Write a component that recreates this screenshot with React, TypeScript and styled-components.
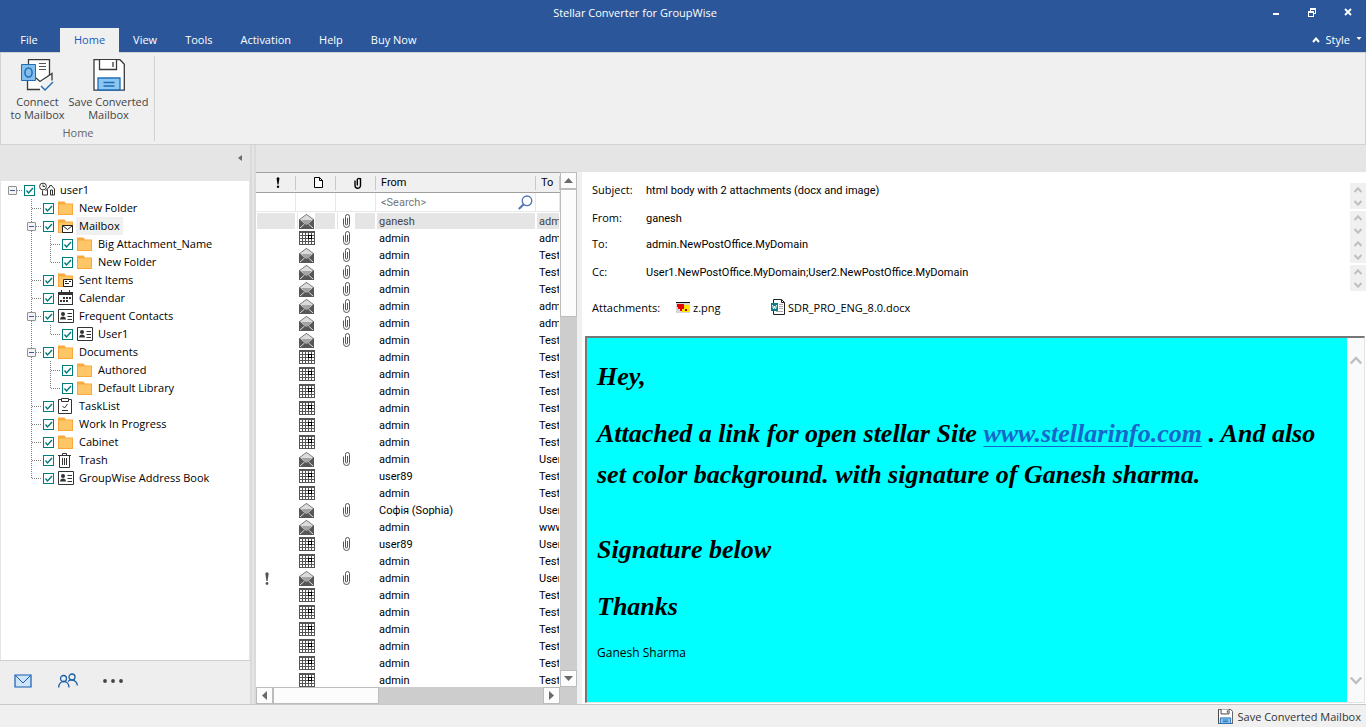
import React from "react";
import styled, { createGlobalStyle, css } from "styled-components";

const UI = `"Open Sans", "Noto Sans", sans-serif`;
const LIST = `Roboto, "Noto Sans", sans-serif`;

const GlobalStyle = createGlobalStyle`
  * { box-sizing: border-box; }
  body { margin: 0; background: #f0f0f0; font-family: ${UI}; font-size: 11px; color: #000; }
  button, input { font: inherit; color: inherit; padding: 0; margin: 0; border: 0; background: none; }
  svg { display: block; flex: none; }
`;

const Window = styled.div`
  height: 100vh;
  display: flex;
  flex-direction: column;
  overflow: hidden;
`;

/* ---------- title bar and tabs ---------- */

const TitleBar = styled.header`
  display: flex;
  height: 28px;
  flex: none;
  background: #2b579a;
  color: #fff;
`;

const Title = styled.h1`
  flex: 1;
  margin: 0;
  padding-left: 12px;
  font-size: 11px;
  font-weight: 400;
  line-height: 26px;
  text-align: center;
`;

const WindowButton = styled.button`
  width: 36px;
  height: 24px;
  display: grid;
  place-items: center;
`;

const TabBar = styled.nav`
  display: flex;
  height: 24px;
  flex: none;
  background: #2b579a;
  color: #fff;
`;

const Tab = styled.button<{ $active?: boolean; $file?: boolean }>`
  padding: 0 14px;
  line-height: 24px;
  white-space: nowrap;
  ${(p) => p.$file && css`width: 60px; padding-right: 16px;`}
  ${(p) =>
    p.$active &&
    css`
      background: #f0f0f0;
      color: #185abd;
      height: 25px;
      padding-bottom: 1px;
      position: relative;
    `}
`;

const StyleMenu = styled.button`
  margin-left: auto;
  padding: 0 4px 1px 0;
  display: flex;
  align-items: center;
  gap: 6px;
`;

/* ---------- ribbon ---------- */

const Ribbon = styled.section`
  height: 93px;
  flex: none;
  padding: 3px 1px;
  border: 1px solid #d2d2d2;
  background: #f0f0f0;
  display: flex;
`;

const RibbonGroup = styled.div`
  display: flex;
  flex-direction: column;
  width: 153px;
  border-right: 1px solid #d2d2d2;
`;

const RibbonButtons = styled.div`
  display: flex;
  justify-content: center;
  padding-left: 3px;
`;

const RibbonButton = styled.button`
  display: flex;
  flex-direction: column;
  align-items: center;
  gap: 4px;
  padding: 3px 2px 0;
  line-height: 13px;
  color: #444;
  white-space: pre-line;
`;

const GroupLabel = styled.div`
  margin-top: 5px;
  line-height: 14px;
  text-align: center;
  color: #666;
`;

/* ---------- workspace ---------- */

const Workspace = styled.main`
  flex: 1;
  min-height: 0;
  display: flex;
  background: #e5e5e5;
`;

const Sidebar = styled.aside`
  width: 250px;
  flex: none;
  display: flex;
  flex-direction: column;
`;

const SidebarHead = styled.div`
  height: 36px;
  flex: none;
  display: flex;
  justify-content: flex-end;
  padding: 7px 8px 0 0;
`;

const CollapseButton = styled.button`
  width: 5px;
  height: 12px;
`;

const Tree = styled.ul`
  flex: 1;
  min-height: 0;
  margin: 0 1px;
  padding: 0 0 0 2px;
  overflow: hidden;
  list-style: none;
  background: #fff;
`;

const TreeRow = styled.li`
  display: flex;
  align-items: center;
  height: 18px;
`;

type Line = "none" | "pass" | "tee" | "end";

const vertical = "repeating-linear-gradient(to bottom, #808080 0 1px, transparent 1px 2px)";
const horizontal = "repeating-linear-gradient(to right, #808080 0 1px, transparent 1px 2px)";

const Guide = styled.span<{ $line: Line }>`
  width: 19px;
  height: 18px;
  flex: none;
  display: grid;
  place-items: center;
  background-repeat: no-repeat;
  background-image: ${(p) =>
    p.$line === "none" ? "none" : p.$line === "pass" ? vertical : `${vertical}, ${horizontal}`};
  background-position: 9px 0, 10px 9px;
  background-size: 1px ${(p) => (p.$line === "end" ? "10px" : "18px")}, 9px 1px;
`;

const RootGuide = styled(Guide)`
  background-image: ${horizontal};
  background-position: 10px 9px;
  background-size: 9px 1px;
`;

const Expander = styled.button`
  width: 9px;
  height: 9px;
  border: 1px solid #919191;
  border-radius: 1px;
  background: linear-gradient(#3c5aa0, #3c5aa0) center / 5px 1px no-repeat, #f4f4f4;
`;

const CheckCell = styled.span`
  display: grid;
  margin: 0 4px 0 2px;
  > * { grid-area: 1 / 1; }
  svg { pointer-events: none; }
`;

const Check = styled.input`
  appearance: none;
  width: 11px;
  height: 11px;
  border: 1px solid #007c7c;
  background: #fff;
`;

const TreeIcon = styled.span`
  width: 18px;
  height: 16px;
  flex: none;
`;

const TreeLabel = styled.label<{ $selected?: boolean }>`
  height: 18px;
  padding: 0 3px;
  line-height: 17px;
  white-space: nowrap;
  background: ${(p) => (p.$selected ? "#f0f0f0" : "transparent")};
`;

const SidebarNav = styled.nav`
  height: 44px;
  flex: none;
  display: flex;
  align-items: center;
  gap: 25px;
  padding: 0 0 4px 13px;
  border-top: 1px solid #cfcfcf;
  background: #eee;
`;

const NavButton = styled.button`
  width: 20px;
  height: 20px;
  display: grid;
  place-items: center;
`;

const Splitter = styled.div`
  width: 6px;
  flex: none;
  background: #e5e5e5;
  border: solid #dadada;
  border-width: 0 2px;
`;

const Content = styled.div`
  flex: 1;
  min-width: 0;
  display: flex;
  padding-top: 27px;
`;

/* ---------- message list ---------- */

const ListPane = styled.section`
  width: 326px;
  flex: none;
  display: grid;
  grid-template: minmax(0, 1fr) 17px / 304px 17px;
  background: #f0f0f0;
`;

const TableArea = styled.div`
  overflow: hidden;
  background: #fff;
`;

const Table = styled.table`
  width: 100%;
  table-layout: fixed;
  border-collapse: separate;
  border-spacing: 0;
  font-family: ${LIST};
  white-space: nowrap;
  th, td { padding: 0; overflow: hidden; }
`;

const HeadCell = styled.th`
  height: 21px;
  font-weight: 400;
  text-align: left;
  border: solid #a0a0a0;
  border-width: 1px 0;
  background: linear-gradient(#c8c8c8, #c8c8c8) right center / 1px 14px no-repeat, #f0f0f0;
`;

const HeadInner = styled.div<{ $icon?: boolean }>`
  display: flex;
  align-items: center;
  justify-content: ${(p) => (p.$icon ? "center" : "flex-start")};
  padding-left: ${(p) => (p.$icon ? 4 : 5)}px;
`;

const SearchCell = styled.td`
  height: 19px;
  border: solid #e8e8e8;
  border-width: 0 1px 1px 0;
`;

const SearchField = styled.div`
  display: flex;
  align-items: center;
  padding: 0 2px 0 5px;
`;

const SearchInput = styled.input`
  flex: 1;
  min-width: 0;
  height: 18px;
  outline: 0;
  &::placeholder { color: #777; opacity: 1; }
`;

const Cell = styled.td<{ $selected?: boolean }>`
  height: 17px;
  color: ${(p) => (p.$selected ? "#444" : "#000")};
  background-clip: padding-box;
  border: solid #fff;
  border-width: 1px 1px 0;
  background-color: ${(p) => (p.$selected ? "#e5e5e5" : "#fff")};
`;

const CellInner = styled.div<{ $kind: "flag" | "icon" | "text" }>`
  display: flex;
  align-items: center;
  height: 16px;
  padding-left: ${(p) => (p.$kind === "flag" ? 8 : p.$kind === "icon" ? 1 : 2)}px;
`;

const IconPatch = styled.span`
  width: 17px;
  height: 16px;
  display: grid;
  place-items: center;
  background: #fff;
`;

const VScroll = styled.div`
  display: flex;
  flex-direction: column;
  background: #cdcdcd;
`;

const HScroll = styled.div`
  display: flex;
  background: #cdcdcd;
`;

const ScrollButton = styled.button`
  width: 17px;
  height: 17px;
  flex: none;
  display: grid;
  place-items: center;
  border: 1px solid #bcbcbc;
  background: #fcfcfc;
`;

const Thumb = styled.div<{ $vertical?: boolean }>`
  border: 1px solid #bcbcbc;
  background: #fcfcfc;
  ${(p) => (p.$vertical ? "height: 128px;" : "width: 106px;")}
`;

const Track = styled.div`
  flex: 1;
`;

const Corner = styled.div`
  background: #cdcdcd;
`;

/* ---------- preview ---------- */

const Preview = styled.section`
  flex: 1;
  min-width: 0;
  display: flex;
  flex-direction: column;
  background: #fff;
`;

const Fields = styled.div`
  flex: none;
  display: flex;
  flex-direction: column;
  gap: 2px;
  padding: 11px 0 15px 10px;
`;

const Field = styled.div`
  display: flex;
  height: 26px;
  line-height: 14px;
`;

const FieldName = styled.span`
  width: 54px;
  flex: none;
`;

const FieldValue = styled.span`
  flex: 1;
  min-width: 0;
  font-family: ${LIST};
  line-height: 16px;
  white-space: nowrap;
  overflow: hidden;
`;

const Spin = styled.div`
  width: 16px;
  height: 26px;
  flex: none;
  display: grid;
  background: #f0f0f0;
`;

const SpinButton = styled.button`
  display: grid;
  place-items: center;
  padding-right: 1px;
`;

const AttachmentRow = styled.div`
  display: flex;
  align-items: center;
  height: 28px;
`;

const AttachmentName = styled.span`
  width: 84px;
`;

const Attachment = styled.button`
  display: flex;
  align-items: center;
  gap: 3px;
  width: 95px;
  white-space: nowrap;
`;

const BodyFrame = styled.article`
  flex: 1;
  min-height: 0;
  margin: 0 1px 1px 3px;
  display: flex;
  border: solid #777;
  border-width: 2px 1px 1px 2px;
  border-right-color: #e3e3e3;
  border-bottom-color: #e3e3e3;
`;

const MessageBody = styled.div`
  flex: 1;
  min-width: 0;
  overflow: hidden;
  padding: 18px 24px 0 10px;
  background: #00ffff;
`;

const Script = styled.p`
  margin: 0 0 16px;
  font-family: "Liberation Serif", serif;
  font-style: italic;
  font-weight: 700;
  font-size: 26px;
  line-height: 41px;
`;

const SignatureBlock = styled.div`
  margin-top: 34px;
`;

const Signer = styled.p`
  margin: 0;
  font-size: 12px;
  line-height: 20px;
`;

const BodyLink = styled.a`
  color: #1766c9;
  text-decoration: underline;
  text-decoration-thickness: 1px;
  text-underline-offset: 4px;
`;

const BodyScroll = styled.div`
  width: 17px;
  flex: none;
  display: flex;
  flex-direction: column;
  justify-content: space-between;
  padding: 12px 0;
  background: #fafafa;
`;

const BodyScrollButton = styled.button`
  height: 20px;
  display: grid;
  place-items: center;
`;

const StatusBar = styled.footer`
  height: 23px;
  flex: none;
  display: flex;
  justify-content: flex-end;
  padding-right: 5px;
  border-top: 1px solid #c8c8c8;
  background: #f0f0f0;
  color: #333;
`;

const StatusButton = styled.button`
  display: flex;
  align-items: center;
  gap: 5px;
`;

/* ---------- icons ---------- */

const ConnectIcon = () => (
  <svg width="33" height="32" viewBox="0 0 33 32" fill="none">
    <path d="M7.500.5h21V15L18 22H7.500z" fill="#fff" />
    <path d="M7.500 22V30H20L20 25 30 15V18z" fill="#fff" />
    <path d="M7.500 5V.5h21V16M6.500 21v9.500H19" stroke="#3b3b3b" strokeWidth="1.300" />
    <path d="M18 4.500h7M18 7.500h7M18 10.500h7" stroke="#555" />
    <path d="M15 19l4 3.500 12-8v7" stroke="#3b3b3b" strokeWidth="1.300" />
    <path d="M.5 5.500h14v16H.5z" fill="#83beec" stroke="#1f6db5" />
    <ellipse cx="7.500" cy="13.500" rx="3.600" ry="4.500" stroke="#1f6db5" strokeWidth="1.500" />
    <path d="M20 27l4 4 8-8" stroke="#1f6db5" strokeWidth="1.400" />
  </svg>
);

const DiskIcon = ({ size = 32 }: { size?: number }) => (
  <svg width={size} height={size} viewBox="0 0 32 32" fill="none" strokeWidth={size < 20 ? 2 : 1.3}>
    <path d="M1 .7h26l4.300 4.500v26H1z" fill="#fff" stroke="#3b3b3b" />
    <path d="M6.500 1v9.500h17V1" fill="#fff" stroke="#3b3b3b" />
    <path d="M20 3v5" stroke="#3b3b3b" />
    <path d="M5 31V19h22v12z" fill="#8cc6f2" stroke="#1f6db5" />
    <path d="M10.500 23.500h11M10.500 27h11" stroke="#1f6db5" />
  </svg>
);

const FolderShape = () => (
  <>
    <path d="M0 1.500H6.500L8 3.500H15V15H0z" fill="#f9a93a" />
    <path d="M1 4.500H14V14H1z" fill="#ffc668" />
  </>
);

const ContactShape = () => (
  <>
    <path d="M.5 1.500h15v13H.5z" fill="#fff" stroke="#333" />
    <circle cx="5" cy="6" r="2" fill="#333" />
    <path d="M2 11.500c0-4 6-4 6 0z" fill="#333" />
    <path d="M9.500 5.500H14M9.500 8.500H14M9.500 11.500H14" stroke="#333" />
  </>
);

type TreeIconName = "home" | "folder" | "mailbox" | "sent" | "calendar" | "contact" | "task" | "trash";

const TreeGlyph = ({ name }: { name: TreeIconName }) => (
  <svg width="17" height="16" viewBox="0 0 17 16" fill="none">
    {name === "home" && (
      <g stroke="#333">
        <circle cx="4" cy="4.500" r="3.400" />
        <path d="M4 2.500v2h2M3.500 8.500v4.500h5V7.500" />
        <path d="M6.500 9l5.500-6 3.500 4V13h-4M9.500 6l2-3M11.500 13V8h2v5" />
      </g>
    )}
    {name === "folder" && <FolderShape />}
    {name === "mailbox" && (
      <>
        <FolderShape />
        <path d="M4.500 7.500h10v7h-10z" fill="#fff" stroke="#222" />
        <path d="M4.500 7.500l5 4 5-4" stroke="#222" />
      </>
    )}
    {name === "sent" && (
      <>
        <FolderShape />
        <path d="M5.500 7.500h9v7h-9z" fill="#fff" stroke="#222" />
        <path d="M11 9.500h2M7 11.500h4M7 9.500h2" stroke="#222" />
      </>
    )}
    {name === "calendar" && (
      <g shapeRendering="crispEdges">
        <path d="M0 2h15v13H0z" fill="#333" />
        <path d="M1 5h13v9H1z" fill="#fff" />
        <path d="M3 0h1v3H3zM11 0h1v3h-1z" fill="#333" />
        <path d="M5 7h2v2H5zM8 7h2v2H8zM11 7h2v2h-2zM2 10h2v2H2zM5 10h2v2H5zM8 10h2v2H8z" fill="#333" />
      </g>
    )}
    {name === "contact" && <ContactShape />}
    {name === "task" && (
      <>
        <path d="M.5 1.500h13v14H.5z" fill="#fff" stroke="#333" />
        <path d="M3.500.5h7v3h-7z" fill="#fff" stroke="#333" />
        <path d="M4.500 8l2 2 3-4M4 12.500h6" stroke="#333" />
      </>
    )}
    {name === "trash" && (
      <>
        <path d="M1.500 3.500h10v12h-10z" fill="#fff" stroke="#333" />
        <path d="M0 3.500h13M4.500 3V1.500h4V3M4.500 6v7M6.500 6v7M8.500 6v7" stroke="#333" />
      </>
    )}
  </svg>
);

const CheckMark = () => (
  <svg width="11" height="11" viewBox="0 0 11 11" fill="none">
    <path d="M2.500 5.500l2 2.500 4.500-5" stroke="#007c7c" strokeWidth="1.400" />
  </svg>
);

const EnvelopeIcon = () => (
  <svg width="15" height="15" viewBox="0 0 15 15">
    <path d="M0 5.500V15h15V5.500L7.500 0z" fill="#575757" />
    <path d="M1 5.500L7.500.8 14 5.500 10.500 9H4.500z" fill="#dcdcdc" />
    <path d="M2.500 6h10L10 9.500 7.500 11 5 9.500z" fill="#a4a4a4" />
    <path d="M1 14l4.500-4M14 14l-4.500-4" stroke="#ddd" />
  </svg>
);

const GridIcon = () => (
  <svg width="16" height="14" viewBox="0 0 16 14" shapeRendering="crispEdges">
    <path d="M0 0h16v14H0z" fill="#555" />
    {[2, 5, 8, 11].map((y) =>
      [1, 4, 7, 10, 13].map((x) => <rect key={`${x}-${y}`} x={x} y={y} width="2" height="2" fill="#fff" />),
    )}
    <path d="M9 4h4v4H9z" fill="#000" />
    <path d="M10 5h2v2h-2z" fill="#fff" />
  </svg>
);

const ClipIcon = () => (
  <svg width="8" height="14" viewBox="0 0 8 14" fill="none" stroke="#555">
    <path d="M.5 4.500v6a3 3 0 0 0 6 0V2.500a2 2 0 0 0-4 0V10a1 1 0 0 0 2 0V4" />
  </svg>
);

const HeadClipIcon = () => (
  <svg width="8" height="12" viewBox="0 0 8 12" fill="none" stroke="#000" strokeWidth="1.400">
    <path d="M1 3.500v5a2.500 2.500 0 0 0 5.500 0V2.500a1.700 1.700 0 0 0-3.200 0V8.500M6.500 1v8" />
  </svg>
);

const BangIcon = ({ dark }: { dark?: boolean }) => (
  <svg width="4" height={dark ? 11 : 13} viewBox="0 0 4 13" fill={dark ? "#000" : "#555"}>
    <path d="M.3 1.500Q2-.8 3.700 1.500L2.600 9H1.400z" />
    <circle cx="2" cy="11.500" r="1.400" />
  </svg>
);

const PageIcon = () => (
  <svg width="9" height="11" viewBox="0 0 9 11" fill="#fff" stroke="#000">
    <path d="M.5.5h5l3 3v7h-8zM5.500.5v3h3" />
  </svg>
);

const Arrow = ({ d }: { d: string }) => (
  <svg width="9" height="9" viewBox="0 0 9 9" fill="#6a6a6a">
    <path d={d} />
  </svg>
);

const Chevron = ({ up, big }: { up?: boolean; big?: boolean }) => (
  <svg width={big ? 12 : 8} height={big ? 9 : 6} viewBox="0 0 12 9" fill="none" stroke="#bfbfbf" strokeWidth={big ? 2.5 : 3}>
    <path d={up ? "M.7 7.500L6 2l5.300 5.500" : "M.7 1.500L6 7l5.300-5.500"} />
  </svg>
);

/* ---------- data ---------- */

interface Node {
  label: string;
  icon: TreeIconName;
  guides: Line[];
  open?: boolean;
  selected?: boolean;
}

const nodes: Node[] = [
  { label: "New Folder", icon: "folder", guides: ["tee"] },
  { label: "Mailbox", icon: "mailbox", guides: ["tee"], open: true, selected: true },
  { label: "Big Attachment_Name", icon: "folder", guides: ["pass", "tee"] },
  { label: "New Folder", icon: "folder", guides: ["pass", "end"] },
  { label: "Sent Items", icon: "sent", guides: ["tee"] },
  { label: "Calendar", icon: "calendar", guides: ["tee"] },
  { label: "Frequent Contacts", icon: "contact", guides: ["tee"], open: true },
  { label: "User1", icon: "contact", guides: ["pass", "end"] },
  { label: "Documents", icon: "folder", guides: ["tee"], open: true },
  { label: "Authored", icon: "folder", guides: ["pass", "tee"] },
  { label: "Default Library", icon: "folder", guides: ["pass", "end"] },
  { label: "TaskList", icon: "task", guides: ["tee"] },
  { label: "Work In Progress", icon: "folder", guides: ["tee"] },
  { label: "Cabinet", icon: "folder", guides: ["tee"] },
  { label: "Trash", icon: "trash", guides: ["tee"] },
  { label: "GroupWise Address Book", icon: "contact", guides: ["end"] },
];

interface Mail {
  from: string;
  to: string;
  mail?: boolean;
  clip?: boolean;
  flag?: boolean;
}

const TEST = "Test";
const USER = "User";
const ADMIN = "admi";
const appointment = (from = "admin"): Mail => ({ from, to: TEST });

const mails: Mail[] = [
  { from: "ganesh", to: ADMIN, mail: true, clip: true },
  { from: "admin", to: ADMIN, clip: true },
  { from: "admin", to: TEST, mail: true, clip: true },
  { from: "admin", to: TEST, mail: true, clip: true },
  { from: "admin", to: TEST, mail: true, clip: true },
  { from: "admin", to: ADMIN, mail: true, clip: true },
  { from: "admin", to: ADMIN, mail: true, clip: true },
  { from: "admin", to: TEST, mail: true, clip: true },
  appointment(),
  appointment(),
  appointment(),
  appointment(),
  appointment(),
  appointment(),
  { from: "admin", to: USER, mail: true, clip: true },
  appointment("user89"),
  appointment(),
  { from: "Софія (Sophia)", to: USER, mail: true, clip: true },
  { from: "admin", to: "www", mail: true },
  { from: "user89", to: USER, clip: true },
  appointment(),
  { from: "admin", to: USER, mail: true, clip: true, flag: true },
  appointment(),
  appointment(),
  appointment(),
  appointment(),
  appointment(),
  appointment(),
];

/* ---------- parts ---------- */

const CheckBox = ({ id }: { id: string }) => (
  <CheckCell>
    <Check id={id} type="checkbox" defaultChecked />
    <CheckMark />
  </CheckCell>
);

const FolderTree = () => (
  <Tree aria-label="Folders">
    <TreeRow>
      <RootGuide $line="none">
        <Expander aria-label="Collapse user1" />
      </RootGuide>
      <CheckBox id="node-root" />
      <TreeIcon>
        <TreeGlyph name="home" />
      </TreeIcon>
      <TreeLabel htmlFor="node-root">user1</TreeLabel>
    </TreeRow>
    {nodes.map((n, i) => (
      <TreeRow key={i}>
        <Guide $line="none" />
        {n.guides.map((line, g) => (
          <Guide key={g} $line={line}>
            {n.open && <Expander aria-label={`Collapse ${n.label}`} />}
          </Guide>
        ))}
        <CheckBox id={`node-${i}`} />
        <TreeIcon>
          <TreeGlyph name={n.icon} />
        </TreeIcon>
        <TreeLabel htmlFor={`node-${i}`} $selected={n.selected}>
          {n.label}
        </TreeLabel>
      </TreeRow>
    ))}
  </Tree>
);

const MailRow = ({ mail, selected }: { mail: Mail; selected: boolean }) => (
  <tr>
    <Cell $selected={selected}>
      <CellInner $kind="flag">{mail.flag && <BangIcon />}</CellInner>
    </Cell>
    <Cell $selected={selected}>
      <CellInner $kind="icon">
        <IconPatch>{mail.mail ? <EnvelopeIcon /> : <GridIcon />}</IconPatch>
      </CellInner>
    </Cell>
    <Cell $selected={selected}>
      <CellInner $kind="icon">
        <IconPatch>{mail.clip && <ClipIcon />}</IconPatch>
      </CellInner>
    </Cell>
    <Cell $selected={selected}>
      <CellInner $kind="text">{mail.from}</CellInner>
    </Cell>
    <Cell $selected={selected}>
      <CellInner $kind="text">{mail.to}</CellInner>
    </Cell>
  </tr>
);

const MailTable = () => (
  <TableArea>
    <Table>
      <colgroup>
        <col width="40" />
        <col width="40" />
        <col width="40" />
        <col width="160" />
        <col />
      </colgroup>
      <thead>
        <tr>
          <HeadCell aria-label="Importance"><HeadInner $icon><BangIcon dark /></HeadInner></HeadCell>
          <HeadCell aria-label="Type"><HeadInner $icon><PageIcon /></HeadInner></HeadCell>
          <HeadCell aria-label="Attachment"><HeadInner $icon><HeadClipIcon /></HeadInner></HeadCell>
          <HeadCell><HeadInner>From</HeadInner></HeadCell>
          <HeadCell><HeadInner>To</HeadInner></HeadCell>
        </tr>
      </thead>
      <tbody>
        <tr>
          <SearchCell />
          <SearchCell />
          <SearchCell />
          <SearchCell>
            <SearchField>
              <SearchInput placeholder="<Search>" aria-label="Search by sender" />
              <svg width="15" height="15" viewBox="0 0 15 15" fill="none" stroke="#4f74b0">
                <circle cx="9" cy="5.800" r="4.800" strokeWidth="1.300" />
                <path d="M5.500 9.500L.8 14" strokeWidth="2" />
              </svg>
            </SearchField>
          </SearchCell>
          <SearchCell />
        </tr>
        {mails.map((m, i) => (
          <MailRow key={i} mail={m} selected={i === 0} />
        ))}
      </tbody>
    </Table>
  </TableArea>
);

const FieldRow = ({ name, value }: { name: string; value: string }) => (
  <Field>
    <FieldName>{name}</FieldName>
    <FieldValue>{value}</FieldValue>
    <Spin>
      <SpinButton aria-label={`Scroll ${name} up`}><Chevron up /></SpinButton>
      <SpinButton aria-label={`Scroll ${name} down`}><Chevron /></SpinButton>
    </Spin>
  </Field>
);

export default function App() {
  return (
    <Window>
      <GlobalStyle />
      <TitleBar>
        <Title>Stellar Converter for GroupWise</Title>
        <WindowButton aria-label="Minimize">
          <svg width="8" height="8" viewBox="0 0 8 8"><path d="M1 5h6v2H1z" fill="#fff" /></svg>
        </WindowButton>
        <WindowButton aria-label="Restore">
          <svg width="8" height="9" viewBox="0 0 8 9" fill="#fff" shapeRendering="crispEdges">
            <path d="M2 0h6v6H6V5h1V2H3v1H2zM0 3h6v6H0zM1 5v3h4V5z" fillRule="evenodd" />
          </svg>
        </WindowButton>
        <WindowButton aria-label="Close">
          <svg width="8" height="8" viewBox="0 0 8 8" stroke="#fff" strokeWidth="1.800"><path d="M1 1l6 6M7 1L1 7" /></svg>
        </WindowButton>
      </TitleBar>
      <TabBar>
        <Tab $file>File</Tab>
        <Tab $active>Home</Tab>
        <Tab>View</Tab>
        <Tab>Tools</Tab>
        <Tab>Activation</Tab>
        <Tab>Help</Tab>
        <Tab>Buy Now</Tab>
        <StyleMenu>
          <svg width="8" height="6" viewBox="0 0 8 6" fill="none" stroke="#fff" strokeWidth="2"><path d="M1 5l3-3.500L7 5" /></svg>
          Style
          <svg width="6" height="8" viewBox="0 0 6 8" fill="#fff"><path d="M.5 1h5L3 4z" /></svg>
        </StyleMenu>
      </TabBar>

      <Ribbon>
        <RibbonGroup>
          <RibbonButtons>
            <RibbonButton><ConnectIcon />{"Connect\nto Mailbox"}</RibbonButton>
            <RibbonButton><DiskIcon />{"Save Converted\nMailbox"}</RibbonButton>
          </RibbonButtons>
          <GroupLabel>Home</GroupLabel>
        </RibbonGroup>
      </Ribbon>

      <Workspace>
        <Sidebar>
          <SidebarHead>
            <CollapseButton aria-label="Collapse pane">
              <svg width="5" height="8" viewBox="0 0 5 8" fill="#6a6a6a"><path d="M5 1v6L1 4z" /></svg>
            </CollapseButton>
          </SidebarHead>
          <FolderTree />
          <SidebarNav>
            <NavButton aria-label="Mail">
              <svg width="18" height="14" viewBox="0 0 18 14" fill="#cfe4f8" stroke="#0f5fb4">
                <path d="M1 1h16v12H1z" strokeWidth="1.200" /><path d="M1.500 1.500L9 9l7.500-7.500" fill="none" />
              </svg>
            </NavButton>
            <NavButton aria-label="Contacts">
              <svg width="20" height="15" viewBox="0 0 20 15" fill="none" stroke="#1d5fa6" strokeWidth="1.300">
                <circle cx="5.500" cy="5.500" r="3" /><circle cx="14" cy="4" r="3" />
                <path d="M.7 14.500c.3-8 10-8 10.300 0M10 8.500c3-3.500 9-1 9.300 4" />
              </svg>
            </NavButton>
            <NavButton aria-label="More">
              <svg width="20" height="4" viewBox="0 0 20 4" fill="#444"><circle cx="2" cy="2" r="1.900" /><circle cx="10" cy="2" r="1.900" /><circle cx="18" cy="2" r="1.900" /></svg>
            </NavButton>
          </SidebarNav>
        </Sidebar>
        <Splitter />
        <Content>
          <ListPane>
            <MailTable />
            <VScroll>
              <ScrollButton aria-label="Scroll up"><Arrow d="M0 7h9L4.500 2z" /></ScrollButton>
              <Thumb $vertical />
              <Track />
              <ScrollButton aria-label="Scroll down"><Arrow d="M0 2h9L4.500 7z" /></ScrollButton>
            </VScroll>
            <HScroll>
              <ScrollButton aria-label="Scroll left"><Arrow d="M7 0v9L2 4.500z" /></ScrollButton>
              <Thumb />
              <Track />
              <ScrollButton aria-label="Scroll right"><Arrow d="M2 0v9L7 4.500z" /></ScrollButton>
            </HScroll>
            <Corner />
          </ListPane>
          <Preview>
            <Fields>
              <FieldRow name="Subject:" value="html body with 2 attachments (docx and image)" />
              <div>
                <FieldRow name="From:" value="ganesh" />
                <FieldRow name="To:" value="admin.NewPostOffice.MyDomain" />
              </div>
              <FieldRow name="Cc:" value="User1.NewPostOffice.MyDomain;User2.NewPostOffice.MyDomain" />
              <AttachmentRow>
                <AttachmentName>Attachments:</AttachmentName>
                <Attachment>
                  <svg width="14" height="11" viewBox="0 0 14 11" shapeRendering="crispEdges">
                    <path d="M0 0h14v11H0z" fill="#dcd5d5" /><path d="M0 0h14v1H0z" fill="#111" />
                    <path d="M7 3h6v7H5V7z" fill="#ffe600" /><path d="M1 2h7v5H6v2H4V7H2V5H1z" fill="#e80000" />
                    <path d="M9 7h2v2H9z" fill="#a00" />
                  </svg>
                  z.png
                </Attachment>
                <Attachment>
                  <svg width="14" height="16" viewBox="0 0 14 16" fill="none">
                    <path d="M2.500.5h8l3 3v12h-11z" fill="#fff" stroke="#222" />
                    <path d="M10.500.5v3h3" stroke="#222" />
                    <path d="M8 5.500h4M8 7.500h4M8 9.500h4M5 12.500h7" stroke="#aaa" />
                    <path d="M0 4h7v8H0z" fill="#0e7c86" />
                    <path d="M1.500 6l1 4 1-3 1 3 1-4" stroke="#fff" />
                  </svg>
                  SDR_PRO_ENG_8.0.docx
                </Attachment>
              </AttachmentRow>
            </Fields>
            <BodyFrame>
              <MessageBody>
                <Script>Hey,</Script>
                <Script>
                  Attached a link for open stellar Site <BodyLink href="#">www.stellarinfo.com</BodyLink> . And also set color
                  background. with signature of Ganesh sharma.
                </Script>
                <SignatureBlock>
                  <Script>Signature below</Script>
                  <Script>Thanks</Script>
                  <Signer>Ganesh Sharma</Signer>
                </SignatureBlock>
              </MessageBody>
              <BodyScroll>
                <BodyScrollButton aria-label="Scroll message up"><Chevron up big /></BodyScrollButton>
                <BodyScrollButton aria-label="Scroll message down"><Chevron big /></BodyScrollButton>
              </BodyScroll>
            </BodyFrame>
          </Preview>
        </Content>
      </Workspace>
      <StatusBar>
        <StatusButton><DiskIcon size={15} />Save Converted Mailbox</StatusButton>
      </StatusBar>
    </Window>
  );
}
